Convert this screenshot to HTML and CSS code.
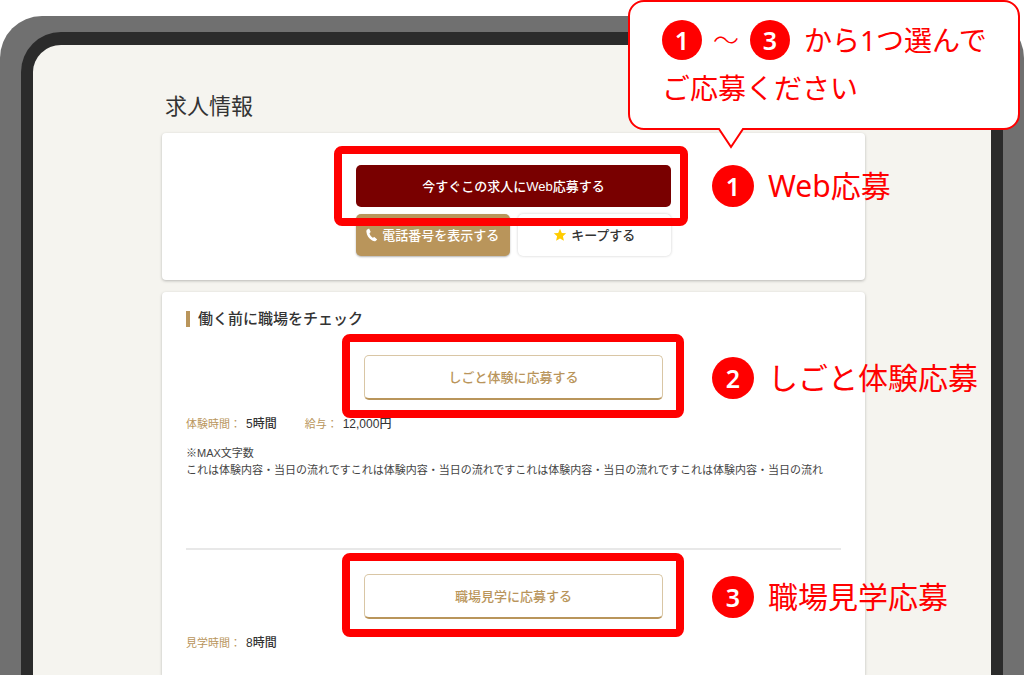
FILE: index.html
```
<!DOCTYPE html>
<html lang="ja">

<head>
  <meta charset="UTF-8">
  <meta name="viewport" content="width=device-width, initial-scale=1">
  <title>求人情報</title>
  <link rel="stylesheet" href="styles.css">
</head>

<body>
<div class="device">
  <main class="screen">
    <h1>求人情報</h1>

    <section class="card apply">
      <div class="target target-web">
        <button type="button" class="btn btn-web">今すぐこの求人にWeb応募する</button>
        <div class="frame"></div>
        <p class="note"><span class="num">1</span>Web応募</p>
      </div>
      <div class="sub-buttons">
        <button type="button" class="btn btn-tel">
          <svg width="12" height="14" viewBox="0 0 12 14"><path d="M1.2 1.6 3.1.6 4.7 3.9 3.5 5.2C3.8 6.8 5 8.6 6.7 9.8L8.4 9 11.2 11.6 9.6 13.1C8.8 13.6 7.4 13.2 6.2 12.5 2.8 10.6.6 7.2.4 3.8.3 2.8.6 2 1.2 1.6Z" fill="#fff"/></svg>
          電話番号を表示する
        </button>
        <button type="button" class="btn btn-keep">
          <svg width="14" height="14" viewBox="0 0 14 14"><path d="M7 .8 8.8 4.9 13.2 5.3 9.9 8.3 10.9 12.8 7 10.5 3.1 12.8 4.1 8.3.8 5.3 5.2 4.9Z" fill="#fc0"/></svg>
          キープする
        </button>
      </div>
    </section>

    <section class="card check">
      <h2>働く前に職場をチェック</h2>

      <div class="trial">
        <div class="target">
          <button type="button" class="btn btn-line">しごと体験に応募する</button>
          <div class="frame"></div>
          <p class="note"><span class="num">2</span>しごと体験応募</p>
        </div>
        <dl>
          <div><dt>体験時間：</dt><dd>5時間</dd></div>
          <div><dt>給与：</dt><dd>12,000円</dd></div>
        </dl>
        <p class="text">※MAX文字数<br>これは体験内容・当日の流れですこれは体験内容・当日の流れですこれは体験内容・当日の流れですこれは体験内容・当日の流れ</p>
      </div>

      <div class="visit">
        <div class="target">
          <button type="button" class="btn btn-line">職場見学に応募する</button>
          <div class="frame"></div>
          <p class="note"><span class="num">3</span>職場見学応募</p>
        </div>
        <dl>
          <div><dt>見学時間：</dt><dd>8時間</dd></div>
        </dl>
      </div>
    </section>
  </main>
</div>

<div class="bubble">
  <p><span class="num">1</span><span class="wave">～</span><span class="num">3</span><span class="lead">から1つ選んで</span></p>
  <p>ご応募ください</p>
  <svg class="tail" width="26" height="21" viewBox="0 0 26 21"><path d="M0 0H26L25 2 13 19 1 2Z" fill="#fff"/><path d="M0 1H1L13 19 25 1H26" fill="none" stroke="#f00" stroke-width="2"/></svg>
</div>
</body>

</html>
```
FILE: styles.css
```
* {
    box-sizing: border-box;
}

body {
    display: flex;
    min-height: 100vh;
    margin: 0;
    padding-top: 16px;
    background: #fff;
    color: #333;
    font-family: "Liberation Sans", "Noto Sans CJK JP", sans-serif;
}

h1,
h2,
p,
dl,
dd {
    margin: 0;
}

/* tablet */
.device {
    display: flex;
    flex: 1;
    min-width: 0;
    padding: 16px 21px 0;
    border-radius: 42px 42px 0 0;
    background: #707070;
}

.screen {
    display: flex;
    flex: 1;
    flex-direction: column;
    min-width: 0;
    padding: 44px 126px 0 129px;
    border: solid #2b2b2b;
    border-width: 13px 12px 0;
    border-radius: 40px 40px 0 0;
    background: #f5f4ef;
}

h1 {
    margin-bottom: 9px;
    padding-left: 3px;
    font-size: 22px;
    font-weight: 400;
    line-height: 35px;
}

.card {
    border-radius: 4px;
    background: #fff;
    box-shadow: 0 1px 3px rgba(0, 0, 0, 0.25);
}

.apply {
    margin-bottom: 12px;
    padding: 32px 24px 24px;
}

.check {
    flex: 1;
    padding: 16px 24px 20px;
    border-radius: 4px 4px 0 0;
}

/* buttons */
.btn {
    display: flex;
    align-items: center;
    justify-content: center;
    gap: 4px;
    width: 100%;
    height: 42px;
    padding: 0 0 2px;
    border: 0;
    border-radius: 5px;
    font-family: inherit;
    font-size: 13px;
    font-weight: 500;
    white-space: nowrap;
    cursor: pointer;
}

.btn svg {
    margin-top: 2px;
}

.btn-web {
    background: #790000;
    color: #fff;
}

.btn-tel {
    background: #b9955b;
    color: #fff;
    box-shadow: 0 1px 2px rgba(0, 0, 0, 0.3);
}

.btn-keep {
    background: #fff;
    color: #333;
    box-shadow: 0 0 3px rgba(0, 0, 0, 0.2);
}

.btn-line {
    height: 45px;
    border: 1px solid #d9c6a5;
    border-bottom: 2px solid #b9955b;
    background: #fff;
    color: #b9955b;
}

.sub-buttons {
    display: flex;
    gap: 8px;
    max-width: 315px;
    margin: 7px auto 0;
}

/* work check */
h2 {
    display: flex;
    align-items: center;
    gap: 8px;
    margin-bottom: 25px;
    font-size: 15px;
    font-weight: 500;
    line-height: 22px;
}

h2::before {
    content: "";
    width: 4px;
    height: 16px;
    background: #b9955b;
}

dl {
    display: flex;
    gap: 28px;
    margin-top: 16px;
    font-size: 11px;
    line-height: 16px;
}

dl div {
    display: flex;
    gap: 5px;
}

dt {
    color: #b9955b;
}

dd {
    font-size: 12px;
    font-weight: 500;
}

.text {
    margin-top: 13px;
    color: #444;
    font-size: 11px;
    line-height: 17px;
}

.trial {
    padding-bottom: 69px;
    border-bottom: 2px solid #e8e8e8;
}

.visit {
    padding-top: 24px;
}

/* red marks */
.target {
    position: relative;
    max-width: 299px;
    margin: 0 auto;
}

.target-web {
    max-width: 315px;
}

.frame {
    position: absolute;
    inset: -21px -21px -18px -22px;
    border: 8px solid #f00;
    border-radius: 8px;
    pointer-events: none;
}

.target-web .frame {
    inset: -19px -17px -19px -22px;
}

.note {
    position: absolute;
    top: 0;
    bottom: 0;
    left: calc(100% + 49px);
    display: flex;
    align-items: center;
    gap: 14px;
    color: #f00;
    font-family: "Noto Sans", "Noto Sans CJK JP", sans-serif;
    font-size: 30px;
    line-height: 42px;
    white-space: nowrap;
}

.target-web .note {
    left: calc(100% + 41px);
}

.num {
    width: 42px;
    height: 42px;
    border-radius: 50%;
    background: #f00;
    color: #fff;
    font-size: 25px;
    font-weight: 600;
    line-height: 42px;
    text-align: center;
}

.bubble {
    position: absolute;
    top: 0;
    right: 4px;
    width: 392px;
    padding: 14px 24px 16px 32px;
    border: 2px solid #f00;
    border-radius: 16px;
    background: #fff;
    color: #f00;
    font-family: "Noto Sans", "Noto Sans CJK JP", sans-serif;
    font-size: 28px;
    line-height: 48px;
    white-space: nowrap;
}

.bubble p {
    display: flex;
    align-items: center;
}

.bubble .num {
    width: 40px;
    height: 40px;
    line-height: 40px;
}

.wave {
    margin: 0 11px;
    font-size: 26px;
    font-weight: 300;
}

.lead {
    margin-left: 14px;
}

.tail {
    position: absolute;
    top: 100%;
    left: 88px;
}
```
